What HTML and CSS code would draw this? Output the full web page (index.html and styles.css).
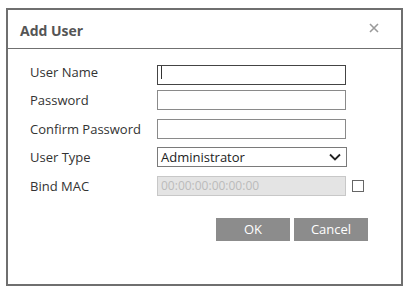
FILE: index.html
```html
<!DOCTYPE html>
<html lang="en">
<head>
    <meta charset="UTF-8">
    <title>Add User</title>
    <link rel="stylesheet" href="styles.css">
</head>
<body>
    <div class="dialog">
        <div class="dlg-head">
            <span class="dlg-title">Add User</span>
            <svg class="dlg-close" width="10" height="10" viewBox="0 0 10 10"><path d="M1 1 L9 9 M9 1 L1 9" stroke="#9a9a9a" stroke-width="1.6"/></svg>
        </div>
        <form class="dlg-body" autocomplete="off">
            <div class="row">
                <label>User Name</label>
                <div class="field">
                    <input type="text" class="txtbox active" value="">
                    <span class="caret"></span>
                </div>
            </div>
            <div class="row">
                <label>Password</label>
                <input type="password" class="txtbox">
            </div>
            <div class="row">
                <label>Confirm Password</label>
                <input type="password" class="txtbox">
            </div>
            <div class="row">
                <label>User Type</label>
                <div class="selbox">
                    <span>Administrator</span>
                    <svg width="12" height="8" viewBox="0 0 12 8"><path d="M1 1.5 L6 6.5 L11 1.5" fill="none" stroke="#222" stroke-width="1.8"/></svg>
                </div>
            </div>
            <div class="row">
                <label>Bind MAC</label>
                <input type="text" class="txtbox disabled" placeholder="00:00:00:00:00:00" disabled>
                <span class="chk"></span>
            </div>
            <div class="btns">
                <button type="button" class="btn">OK</button>
                <button type="button" class="btn">Cancel</button>
            </div>
        </form>
    </div>
</body>
</html>
```

FILE: styles.css
```css
*{
    box-sizing: border-box;
    font-family: "Open Sans", "Noto Sans", sans-serif;
}

body{
    margin: 0;
    background: white;
}

.dialog{
    margin: 8px 0 0 6px;
    width: 397px;
    height: 278px;
    border: 2px solid #6f6f6f;
    background: white;
}

.dlg-head{
    height: 39px;
    border-bottom: 1px solid #707070;
    display: flex;
    align-items: center;
    justify-content: space-between;
    padding: 2px 22px 0 12px;
}
.dlg-title{
    font-size: 14px;
    font-weight: bold;
    color: #555;
}
.dlg-close{
    margin-top: -5px;
}

.dlg-body{
    padding: 13px 0 0 22px;
}

.row{
    display: flex;
    align-items: center;
    height: 20px;
    margin-bottom: 8.4px;
}
.row label{
    width: 127px;
    font-size: 13px;
    color: #333;
}

.field{
    position: relative;
    height: 20px;
}
.caret{
    position: absolute;
    left: 4px;
    top: 4px;
    width: 1px;
    height: 13px;
    background: #333;
}

.txtbox{
    width: 189px;
    height: 20px;
    border: 1px solid #8a8a8a;
    outline: none;
    padding: 0 3px;
    font-size: 12px;
    background: white;
}
.txtbox.active{
    border: 1px solid #444;
}
.txtbox.disabled{
    background: #e4e4e4;
    border-color: #c8c8c8;
}
.txtbox.disabled::placeholder{
    color: #bbb;
}

.selbox{
    width: 190px;
    height: 20px;
    border: 1px solid #7a7a7a;
    display: flex;
    align-items: center;
    justify-content: space-between;
    padding: 0 5px 0 3px;
    font-size: 13px;
    color: #222;
}

.chk{
    width: 12px;
    height: 12px;
    border: 1px solid #666;
    margin-left: 6px;
}

.btns{
    display: flex;
    gap: 4px;
    margin: 22px 0 0 186px;
}
.btn{
    width: 74px;
    height: 23px;
    border: none;
    background: #8c8c8c;
    color: white;
    font-size: 13px;
    padding: 0;
}
```
